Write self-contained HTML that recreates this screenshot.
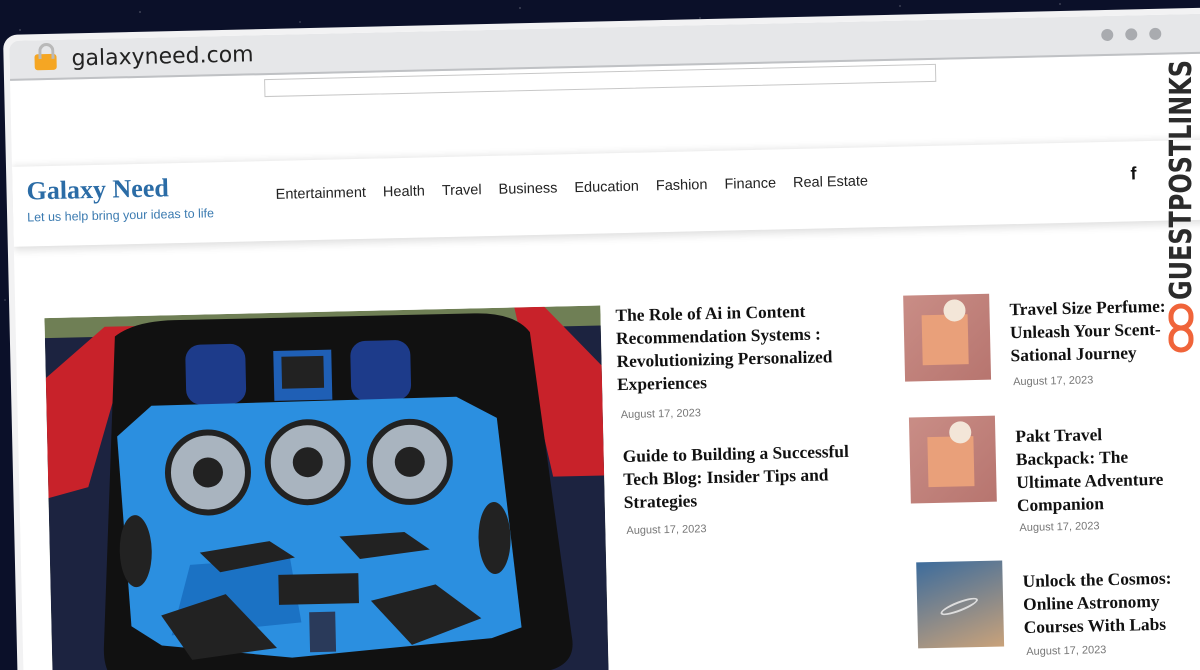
<!DOCTYPE html>
<html><head><meta charset="utf-8"><style>
*{margin:0;padding:0;box-sizing:border-box}
html,body{width:1200px;height:670px;overflow:hidden}
body{background:#0b1029;position:relative;font-family:"Liberation Sans",sans-serif}
.stars{position:absolute;inset:0;background-image:radial-gradient(1px 1px at 20px 30px,#fff8,transparent),radial-gradient(1px 1px at 140px 12px,#fff9,transparent),radial-gradient(1px 1px at 300px 22px,#fff7,transparent),radial-gradient(1px 1px at 520px 8px,#fff9,transparent),radial-gradient(1px 1px at 700px 18px,#fff7,transparent),radial-gradient(1px 1px at 900px 6px,#fff8,transparent),radial-gradient(1px 1px at 1060px 4px,#fff8,transparent),radial-gradient(1px 1px at 5px 300px,#fff6,transparent)}
.win{position:absolute;left:3px;top:35px;width:1215px;height:900px;transform:rotate(-1.3deg);transform-origin:0 0;background:#f2f2f3;border-radius:14px;padding:6px;}
.inner{position:absolute;left:6px;top:6px;right:0;bottom:0;background:#fff;border-radius:10px 0 0 0;overflow:hidden}
.bar{position:absolute;left:0;top:0;right:0;height:40px;background:#e6e7e9;border-bottom:2px solid #bfc1c4}
.lock{position:absolute;left:25px;top:14px;width:22px;height:16px;background:#f5a623;border-radius:3px}
.lock:before{content:"";position:absolute;left:4px;top:-11px;width:10px;height:13px;border:3px solid #b9b9b9;border-bottom:none;border-radius:8px 8px 0 0}
.url{position:absolute;left:62px;top:7px;font-size:22px;color:#222;font-family:"DejaVu Sans","Liberation Sans",sans-serif}
.dot{position:absolute;top:13px;width:12px;height:12px;border-radius:50%;background:#a9abaf}
.ad{position:absolute;left:254px;top:44px;width:672px;height:18px;border:1px solid #c8c8c8}
.nav{position:absolute;left:0;top:126px;width:1300px;height:80px;background:#fff;box-shadow:0 4px 8px rgba(0,0,0,.12),0 -3px 6px rgba(0,0,0,.06)}
.logo{position:absolute;left:14px;top:10px;font-family:"Liberation Serif",serif;font-weight:bold;font-size:26px;color:#2b6ca6}
.tag{position:absolute;left:14px;top:44px;font-size:12.5px;color:#3a7ab0}
.menu{position:absolute;left:263px;top:26px;font-size:14.5px;color:#222;white-space:nowrap}
.menu span{margin-right:17px}
.serif{font-family:"Liberation Serif",serif;font-weight:bold;color:#111}
.t{position:absolute;font-size:17.4px;line-height:23px}
.d{position:absolute;font-size:11px;color:#777}
.th{position:absolute;width:86px;height:86px;background:linear-gradient(135deg,#c98d86,#b7756f);overflow:hidden}
.th i{position:absolute;display:block}
</style></head><body>
<div class="stars"></div>
<div class="win"><div class="inner">
<div class="bar"><div class="lock"></div><div class="url">galaxyneed.com</div>
<div class="dot" style="left:1092px"></div><div class="dot" style="left:1116px"></div><div class="dot" style="left:1140px"></div></div>
<div class="ad"></div>
<div class="nav"><div class="logo">Galaxy Need</div><div class="tag">Let us help bring your ideas to life</div>
<div class="menu"><span>Entertainment</span><span>Health</span><span>Travel</span><span>Business</span><span>Education</span><span>Fashion</span><span>Finance</span><span>Real Estate</span></div>
<div style="position:absolute;left:1118px;top:22px;font-size:18px;font-weight:bold;color:#111">f</div>
</div>
<svg style="position:absolute;left:29px;top:278px" width="556" height="420" viewBox="0 0 556 420">
<rect width="556" height="420" fill="#6f7f55"/>
<rect x="0" y="20" width="556" height="400" fill="#1c2340"/>
<path d="M0 60 L60 10 L90 10 L40 170 L0 180Z" fill="#c8222a"/>
<path d="M556 60 L500 0 L470 0 L505 170 L556 170Z" fill="#c8222a"/>
<path d="M70 20 Q90 5 130 5 L430 5 Q470 5 485 25 L520 330 Q525 360 490 365 L80 370 Q50 368 52 330Z" fill="#111"/>
<rect x="140" y="30" width="60" height="60" rx="15" fill="#1d3b8a"/><rect x="305" y="30" width="60" height="60" rx="15" fill="#1d3b8a"/>
<rect x="228" y="38" width="58" height="50" fill="#1f5fb5"/><rect x="236" y="44" width="42" height="32" fill="#222"/>
<path d="M105 90 L410 88 L450 110 L470 320 L440 330 L240 345 L110 330 L80 310 L70 120Z" fill="#2b8fe0"/>
<path d="M140 250 L240 245 L250 310 L120 320Z" fill="#1b72c4"/>
<g fill="#a9b4bf" stroke="#222" stroke-width="6"><circle cx="160" cy="158" r="40"/><circle cx="260" cy="150" r="40"/><circle cx="362" cy="152" r="40"/></g>
<g fill="#222"><circle cx="160" cy="158" r="15"/><circle cx="260" cy="150" r="15"/><circle cx="362" cy="152" r="15"/>
<ellipse cx="86" cy="235" rx="16" ry="36"/><ellipse cx="445" cy="230" rx="16" ry="36"/>
<path d="M150 238 L220 228 L245 245 L170 258Z"/><path d="M290 225 L355 222 L380 240 L310 248Z"/>
<rect x="228" y="262" width="80" height="30"/><path d="M110 300 L175 280 L225 335 L140 345Z"/><path d="M320 290 L385 275 L430 310 L360 335Z"/>
<rect x="258" y="300" width="26" height="40" fill="#2a3a5a"/></g>
</svg>
<div class="t serif" style="left:600px;top:277px">The Role of Ai in Content<br>Recommendation Systems :<br>Revolutionizing Personalized<br>Experiences</div>
<div class="d" style="left:603px;top:382px">August 17, 2023</div>
<div class="t serif" style="left:604px;top:418px">Guide to Building a Successful<br>Tech Blog: Insider Tips and<br>Strategies</div>
<div class="d" style="left:606px;top:498px">August 17, 2023</div>
<div class="th" style="left:888px;top:275px"><i style="left:18px;top:20px;width:46px;height:50px;background:#e9a07a"></i><i style="left:40px;top:5px;width:22px;height:22px;border-radius:50%;background:#f3e6d8"></i></div>
<div class="t serif" style="left:994px;top:280px">Travel Size Perfume:<br>Unleash Your Scent-<br>Sational Journey</div>
<div class="d" style="left:996px;top:358px">August 17, 2023</div>
<div class="th" style="left:891px;top:397px"><i style="left:18px;top:20px;width:46px;height:50px;background:#e9a07a"></i><i style="left:40px;top:5px;width:22px;height:22px;border-radius:50%;background:#f3e6d8"></i></div>
<div class="t serif" style="left:997px;top:407px">Pakt Travel<br>Backpack: The<br>Ultimate Adventure<br>Companion</div>
<div class="d" style="left:999px;top:504px">August 17, 2023</div>
<div class="th" style="left:895px;top:542px;background:linear-gradient(160deg,#3d6c9c,#c9a27a)"><i style="left:22px;top:40px;width:40px;height:10px;border-radius:50%;border:2px solid #ddd;transform:rotate(-20deg)"></i></div>
<div class="t serif" style="left:1001px;top:552px">Unlock the Cosmos:<br>Online Astronomy<br>Courses With Labs</div>
<div class="d" style="left:1003px;top:628px">August 17, 2023</div>
</div></div>
<svg style="position:absolute;left:1158px;top:55px" width="40" height="250" viewBox="0 0 40 250"><text transform="translate(33,245) rotate(-90)" textLength="240" lengthAdjust="spacingAndGlyphs" font-family="DejaVu Sans, sans-serif" font-weight="bold" font-size="30" fill="#2b2b2b">GUESTPOSTLINKS</text></svg>
<svg style="position:absolute;left:1168px;top:303px" width="26" height="50" viewBox="0 0 26 50"><g fill="none" stroke="#f0643a" stroke-width="5"><rect x="3" y="3" width="20" height="22" rx="10"/><rect x="3" y="25" width="20" height="22" rx="10"/></g></svg>
</body></html>
